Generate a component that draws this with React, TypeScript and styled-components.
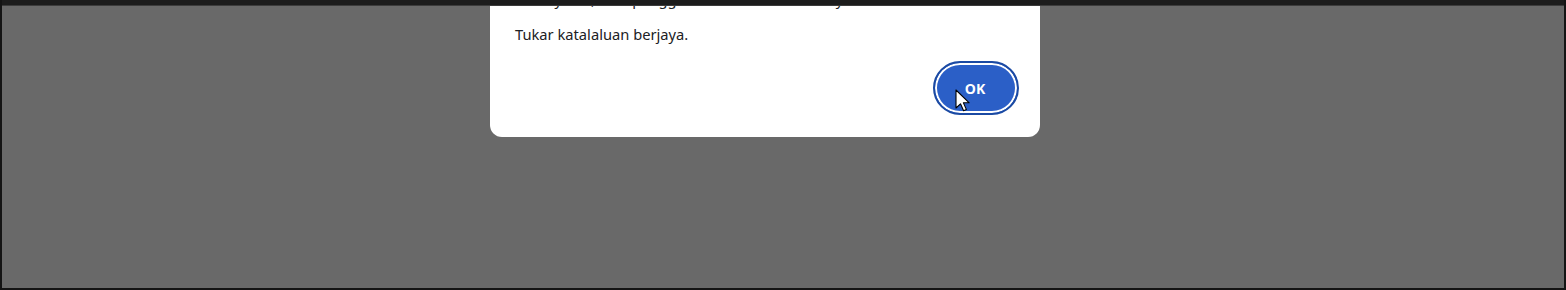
import React from "react";
import styled, { createGlobalStyle } from "styled-components";

const Global = createGlobalStyle`
  html, body { margin: 0; padding: 0; background: #696969; }
  body { font-family: "Noto Sans", "Open Sans", sans-serif; }
`;

const Frame = styled.div`
  position: relative;
  box-sizing: border-box;
  width: 1566px;
  height: 290px;
  background: #696969;
  border-left: 2px solid #141414;
  border-right: 2px solid #141414;
  border-bottom: 2px solid #141414;
  overflow: hidden;
`;

const TopBar = styled.div`
  position: absolute;
  left: 0;
  right: 0;
  top: 0;
  height: 5px;
  background: #1c1c1c;
  border-bottom: 1px solid #3c3c3c;
  z-index: 3;
`;

const Dialog = styled.div`
  box-sizing: border-box;
  width: 550px;
  margin: -31px 0 0 488px;
  background: #ffffff;
  border-radius: 12px;
  padding: 20px 21px 22px 25px;
  display: flex;
  flex-direction: column;
  color: #202124;
`;

const Title = styled.div`
  font-size: 14.7px;
  line-height: 20px;
  color: #202124;
  white-space: nowrap;
`;

const Message = styled.div`
  margin-top: 15px;
  font-size: 14.7px;
  line-height: 20px;
  color: #202124;
`;

const Footer = styled.div`
  display: flex;
  justify-content: flex-end;
  margin-top: 17px;
`;

const OkButton = styled.button`
  position: relative;
  box-sizing: border-box;
  width: 86px;
  height: 54px;
  border-radius: 27px;
  background: #2b5fc7;
  border: 2px solid #1b4aa3;
  box-shadow: inset 0 0 0 2px #ffffff;
  color: #ffffff;
  font-family: "Open Sans", "Noto Sans", sans-serif;
  font-weight: 700;
  font-size: 14px;
  padding: 0 2px 0 0;
  cursor: default;
`;

const Cursor = styled.svg`
  position: absolute;
  left: 20px;
  top: 26px;
  width: 16px;
  height: 24px;
`;

export default function App() {
  return (
    <>
      <Global />
      <Frame>
        <TopBar />
        <Dialog>
          <Title>Anda yakin, kata pengguna anda akan ditukar ya?</Title>
          <Message>Tukar katalaluan berjaya.</Message>
          <Footer>
            <OkButton>
              OK
              <Cursor viewBox="0 0 16 24">
                <path
                  d="M1 1 L1 19 L5.5 14.8 L8.6 21.8 L11.4 20.6 L8.4 13.8 L14.2 13.8 Z"
                  fill="#ffffff"
                  stroke="#000000"
                  strokeWidth="1.1"
                  strokeLinejoin="round"
                />
              </Cursor>
            </OkButton>
          </Footer>
        </Dialog>
      </Frame>
    </>
  );
}
